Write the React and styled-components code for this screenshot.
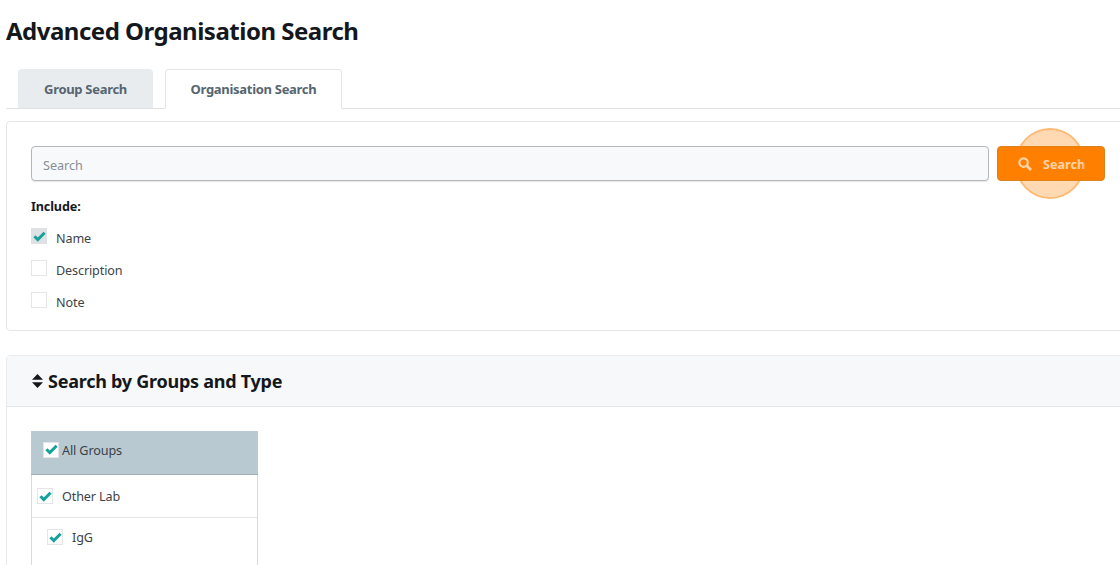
import React from "react";
import styled, { createGlobalStyle } from "styled-components";

const Global = createGlobalStyle`
  html, body { margin: 0; padding: 0; background: #fff; height: 565px; overflow: hidden; }
  body { font-family: "Noto Sans", "Open Sans", "Liberation Sans", sans-serif; color: #212529; }
`;
const Page = styled.div`
  width: 1120px; height: 565px; overflow: hidden; padding: 15px 0 0 6px; box-sizing: border-box;
  display: flex; flex-direction: column;
`;
const Title = styled.h1`
  margin: 0; font-size: 24px; line-height: 32px; font-weight: 700; color: #14181c; letter-spacing: -0.5px;
`;
const Tabs = styled.nav`
  margin-top: 22px; height: 39px; padding-left: 12px; display: flex; gap: 12px;
  border-bottom: 1px solid #dee2e6; box-sizing: content-box;
`;
const Tab = styled.div`
  width: ${p => p.$w}px; height: ${p => p.$active ? 40 : 39}px; box-sizing: border-box;
  display: flex; align-items: center; justify-content: center;
  font-size: 13px; font-weight: 700; color: #56656f; border-radius: 4px 4px 0 0; letter-spacing: -0.3px;
  background: ${p => p.$active ? "#fff" : "#e9ecef"};
  border: 1px solid ${p => p.$active ? "#e3e6e9" : "#e9ecef"};
  border-bottom: ${p => p.$active ? "1px solid #fff" : "0"};
`;
const Card = styled.section`
  margin-top: 12px; width: 1130px; height: 210px; box-sizing: border-box; flex: none;
  border: 1px solid #e3e6e9; border-radius: 4px; padding: 24px 24px 0;
`;
const SearchRow = styled.div`
  display: flex; gap: 8px; width: 1075px;
`;
const SearchInput = styled.input`
  width: 958px; height: 35px; box-sizing: border-box; padding: 4px 11px 0;
  background: #f8f9fa; border: 1px solid #b4b8bb; border-radius: 4px;
  box-shadow: 0 1px 1px rgba(0,0,0,.1);
  font: 12.6px "Noto Sans", "Open Sans", sans-serif; color: #495057;
  &::placeholder { color: #868e96; opacity: 1; }
`;
const SearchButton = styled.button`
  width: 108px; height: 35px; display: flex; align-items: center; padding: 2px 0 0 20px; gap: 11px;
  background: #ff8000; border: 1px solid #d9841f; border-radius: 4px; color: #fff6ec;
  font: 700 12.6px "Noto Sans", "Open Sans", sans-serif; box-sizing: border-box;
`;
const Highlight = styled.div`
  position: absolute; left: 1015px; top: 128px; width: 70px; height: 71px; box-sizing: border-box;
  border-radius: 50%; background: rgba(255,128,0,.3); background-clip: padding-box;
  border: 2.5px solid rgba(255,128,0,.55);
`;
const IncludeLabel = styled.div`
  margin-top: 17px; font-size: 12.6px; line-height: 18px; font-weight: 700; color: #14181c; letter-spacing: -0.12px;
`;
const Options = styled.div`
  margin-top: 12px; display: flex; flex-direction: column; gap: 15px;
`;
const Option = styled.label`
  display: flex; align-items: flex-start; gap: 9px; height: 17px;
  font-size: 12.6px; line-height: 21px; color: #3c4349; letter-spacing: -0.12px;
`;
const Box = styled.span`
  width: 16px; height: 16px; box-sizing: border-box; flex: none;
  display: flex; align-items: center; justify-content: center;
  background: ${p => p.$bg || "#fff"};
  border: 1px solid ${p => p.$line || "#e3e5e7"};
`;
const CollapseCard = styled.section`
  margin-top: 24px; width: 1130px; height: 300px; flex: none; box-sizing: border-box;
  border: 1px solid #e9ebed; border-radius: 4px 4px 0 0;
`;
const CollapseHead = styled.header`
  height: 51px; box-sizing: border-box; background: #f7f8f9; border-bottom: 1px solid #e3e6e9;
  display: flex; align-items: center; gap: 5px; padding-left: 25px;
  font-size: 18px; font-weight: 700; color: #14181c; letter-spacing: -0.25px;
`;
const CollapseBody = styled.div`
  padding: 24px 0 0 24px;
`;
const GroupList = styled.div`
  width: 227px; border: 1px solid #d8dbde; border-top: 0; box-sizing: border-box;
`;
const GroupHead = styled.div`
  height: 44px; margin: 0 -1px 0; background: #b8c9d1; border-bottom: 1px solid #9fb0b8;
  display: flex; align-items: center; gap: 3px; padding: 0 0 4px 12px; box-sizing: border-box;
  font-size: 12.6px; color: #37424a; letter-spacing: -0.12px;
  ${Box} { margin-bottom: 2px; }
`;
const GroupRow = styled.div`
  height: ${p => p.$h}px; box-sizing: border-box; display: flex; align-items: center;
  padding-left: ${p => p.$indent}px; gap: 9px; font-size: 12.6px; color: #3c4349; letter-spacing: -0.12px;
  border-bottom: ${p => p.$line ? "1px solid #e3e6e9" : "0"};
`;
const GlassIcon = styled.svg`
  margin-bottom: 2px; flex: none;
`;

const Check = () => (
  <svg width="13" height="11" viewBox="0 0 13 11" aria-hidden="true">
    <path d="M1.4 5.2 L4.8 8.6 L11.6 1.8" fill="none" stroke="#17a19b" strokeWidth="3" />
  </svg>
);
const Sort = () => (
  <svg width="11" height="14" viewBox="0 0 11 14" aria-hidden="true">
    <path d="M5.5 0 L11 5.8 H0 Z M0 8.2 H11 L5.5 14 Z" fill="#14181c" />
  </svg>
);
const Glass = () => (
  <GlassIcon width="14" height="14" viewBox="0 0 14 14" aria-hidden="true">
    <circle cx="5.6" cy="5.6" r="4.2" fill="none" stroke="currentColor" strokeWidth="2.2" />
    <path d="M8.8 8.8 L13 13" stroke="currentColor" strokeWidth="2.8" />
  </GlassIcon>
);

export default function App() {
  return (
    <Page>
      <Global />
      <Title>Advanced Organisation Search</Title>
      <Tabs>
        <Tab $w={135}>Group Search</Tab>
        <Tab $w={177} $active>Organisation Search</Tab>
      </Tabs>
      <Card>
        <SearchRow>
          <SearchInput placeholder="Search" />
          <SearchButton><Glass />Search</SearchButton>
        </SearchRow>
        <IncludeLabel>Include:</IncludeLabel>
        <Options>
          <Option><Box $bg="#dfe2e4" $line="#dfe2e4"><Check /></Box>Name</Option>
          <Option><Box />Description</Option>
          <Option><Box />Note</Option>
        </Options>
      </Card>
      <CollapseCard>
        <CollapseHead><Sort />Search by Groups and Type</CollapseHead>
        <CollapseBody>
          <GroupList>
            <GroupHead><Box><Check /></Box>All Groups</GroupHead>
            <GroupRow $h={43} $indent={5} $line><Box><Check /></Box>Other Lab</GroupRow>
            <GroupRow $h={38} $indent={15} $line={false}><Box><Check /></Box>IgG</GroupRow>
            <GroupRow $h={20} $indent={15} />
          </GroupList>
        </CollapseBody>
      </CollapseCard>
      <Highlight />
    </Page>
  );
}
